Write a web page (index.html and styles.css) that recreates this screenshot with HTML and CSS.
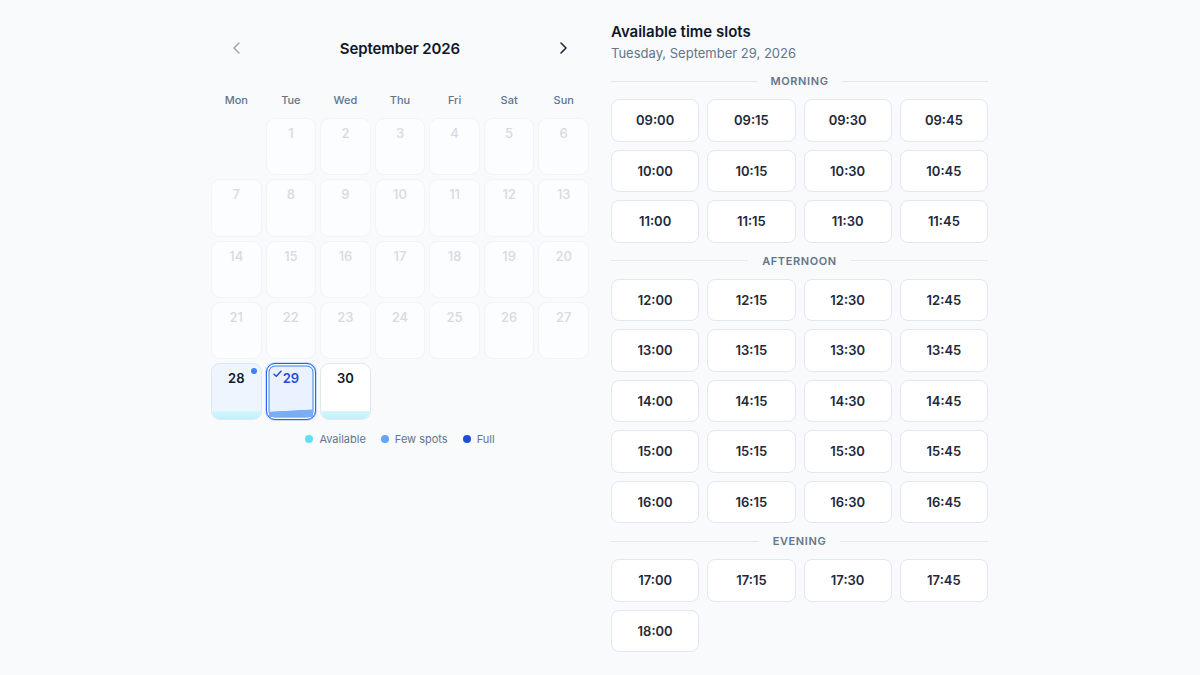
FILE: index.html
```html
<!DOCTYPE html>
<html lang="en">
<head>
<meta charset="utf-8">
<title>Booking</title>
<link rel="stylesheet" href="styles.css">
</head>
<body>
<div class="page">
  <section class="calendar">
    <div class="cal-head">
      <button class="nav nav-prev" aria-label="Previous month">
        <svg width="14" height="14" viewBox="0 0 14 14"><path d="M9 2 L4 7 L9 12" fill="none" stroke="currentColor" stroke-width="1.4" stroke-linecap="round" stroke-linejoin="round"/></svg>
      </button>
      <h2 class="month">September 2026</h2>
      <button class="nav nav-next" aria-label="Next month">
        <svg width="14" height="14" viewBox="0 0 14 14"><path d="M5 2 L10 7 L5 12" fill="none" stroke="currentColor" stroke-width="1.6" stroke-linecap="round" stroke-linejoin="round"/></svg>
      </button>
    </div>
    <div class="weekdays">
      <span>Mon</span><span>Tue</span><span>Wed</span><span>Thu</span><span>Fri</span><span>Sat</span><span>Sun</span>
    </div>
    <div class="grid">
      <div class="blank"></div>
      <div class="day off">1</div><div class="day off">2</div><div class="day off">3</div><div class="day off">4</div><div class="day off">5</div><div class="day off">6</div>
      <div class="day off">7</div><div class="day off">8</div><div class="day off">9</div><div class="day off">10</div><div class="day off">11</div><div class="day off">12</div><div class="day off">13</div>
      <div class="day off">14</div><div class="day off">15</div><div class="day off">16</div><div class="day off">17</div><div class="day off">18</div><div class="day off">19</div><div class="day off">20</div>
      <div class="day off">21</div><div class="day off">22</div><div class="day off">23</div><div class="day off">24</div><div class="day off">25</div><div class="day off">26</div><div class="day off">27</div>
      <div class="day avail today">28<span class="dot"></span><span class="bar"></span></div>
      <div class="day selected">
        <svg class="check" width="9" height="8" viewBox="0 0 9 8"><path d="M1 4.2 L3.3 6.3 L8 1.2" fill="none" stroke="currentColor" stroke-width="1.5" stroke-linecap="round" stroke-linejoin="round"/></svg>
        29<span class="bar wave"></span>
      </div>
      <div class="day avail plain">30<span class="bar"></span></div>
    </div>
    <div class="legend">
      <span class="item"><i class="ldot c-avail"></i>Available</span>
      <span class="item"><i class="ldot c-few"></i>Few spots</span>
      <span class="item"><i class="ldot c-full"></i>Full</span>
    </div>
  </section>

  <section class="slots">
    <h2 class="title">Available time slots</h2>
    <p class="subtitle">Tuesday, September 29, 2026</p>

    <div class="divider first"><span>MORNING</span></div>
    <div class="slot-grid">
      <button class="slot">09:00</button><button class="slot">09:15</button><button class="slot">09:30</button><button class="slot">09:45</button>
      <button class="slot">10:00</button><button class="slot">10:15</button><button class="slot">10:30</button><button class="slot">10:45</button>
      <button class="slot">11:00</button><button class="slot">11:15</button><button class="slot">11:30</button><button class="slot">11:45</button>
    </div>

    <div class="divider"><span>AFTERNOON</span></div>
    <div class="slot-grid">
      <button class="slot">12:00</button><button class="slot">12:15</button><button class="slot">12:30</button><button class="slot">12:45</button>
      <button class="slot">13:00</button><button class="slot">13:15</button><button class="slot">13:30</button><button class="slot">13:45</button>
      <button class="slot">14:00</button><button class="slot">14:15</button><button class="slot">14:30</button><button class="slot">14:45</button>
      <button class="slot">15:00</button><button class="slot">15:15</button><button class="slot">15:30</button><button class="slot">15:45</button>
      <button class="slot">16:00</button><button class="slot">16:15</button><button class="slot">16:30</button><button class="slot">16:45</button>
    </div>

    <div class="divider"><span>EVENING</span></div>
    <div class="slot-grid">
      <button class="slot">17:00</button><button class="slot">17:15</button><button class="slot">17:30</button><button class="slot">17:45</button>
      <button class="slot">18:00</button>
    </div>
  </section>
</div>
</body>
</html>
```

FILE: styles.css
```css
* { box-sizing: border-box; }
html, body { margin: 0; padding: 0; }
body {
  background: #f8fafc;
  font-family: Inter, "Noto Sans", "Liberation Sans", sans-serif;
  color: #0f172a;
  width: 1200px;
  height: 675px;
  overflow: hidden;
}
.page {
  display: flex;
  justify-content: flex-start;
  gap: 22px;
  padding-top: 22px;
  padding-left: 211px;
}

/* Calendar */
.calendar { width: 378px; display: flex; flex-direction: column; }
.cal-head {
  height: 52px;
  display: flex;
  align-items: center;
  justify-content: space-between;
  padding: 0 12px 0 12px;
}
.nav {
  width: 28px; height: 28px;
  border: 0; background: transparent; padding: 0;
  display: flex; align-items: center; justify-content: center;
  cursor: pointer;
}
.nav-prev { color: #94a3b8; }
.nav-next { color: #1e293b; }
.month { margin: 0; font-size: 15px; font-weight: 600; letter-spacing: -0.1px; color: #0f172a; }

.weekdays {
  margin-top: 16px;
  display: grid;
  grid-template-columns: repeat(7, 1fr);
  gap: 4px;
  height: 20px;
  align-items: center;
  text-align: center;
  font-size: 11px;
  color: #64748b;
  font-weight: 500;
}
.grid {
  margin-top: 8px;
  display: grid;
  grid-template-columns: repeat(7, 1fr);
  grid-auto-rows: 57.25px;
  gap: 4px;
}
.day {
  position: relative;
  border-radius: 9px;
  text-align: center;
  padding-top: 6px;
  line-height: 16px;
  font-size: 13px;
  font-weight: 600;
  overflow: hidden;
}
.off {
  color: #d5dbe3;
  font-weight: 500;
  background: rgba(255,255,255,0.5);
  border: 1px solid #f2f4f8;
}
.avail { border: 1px solid #e2e8f0; background: #fff; color: #0f172a; }
.today { background: #eef5ff; border-color: #dce8f8; }
.bar {
  position: absolute; left: 0; right: 0; bottom: 0; height: 8px;
  background: linear-gradient(#d5f6fc, #bff0fb);
}
.dot {
  position: absolute; top: 4px; right: 4px;
  width: 6px; height: 6px; border-radius: 50%;
  background: #3b82f6;
}
.selected {
  background: #eaf2ff;
  color: #1d4ed8;
  border: 1.5px solid #2563eb;
  box-shadow: inset 0 0 0 1.5px #fff, inset 0 0 0 2.5px #3b82f6, 0 0 0 1px rgba(59,130,246,0.25);
}
.selected .bar.wave {
  height: 9px;
  left: 2px; right: 2px; bottom: 2px;
  background: linear-gradient(177deg, transparent 0 30%, #79aef7 36% 100%);
}
.check {
  position: absolute; top: 6px; left: 6px; color: #1d4ed8;
}

.legend {
  margin-top: 12px;
  display: flex;
  justify-content: center;
  gap: 15px;
  font-size: 11px;
  color: #64748b;
}
.item { display: flex; align-items: center; gap: 6px; }
.ldot { width: 8px; height: 8px; border-radius: 50%; display: inline-block; }
.c-avail { background: #5ee0f3; }
.c-few { background: #60a5fa; }
.c-full { background: #1d4ed8; }

/* Slots */
.slots { width: 377px; display: flex; flex-direction: column; }
.title { margin: 0; font-size: 15px; line-height: 20px; font-weight: 600; color: #0f172a; }
.subtitle { margin: 1px 0 0; font-size: 13px; line-height: 20px; color: #64748b; }
.divider {
  display: flex; align-items: center; gap: 14px;
  height: 20px;
  margin: 8px 0 8px;
  font-size: 11px; font-weight: 600; letter-spacing: 0.6px; color: #64748b;
}
.divider.first { margin-top: 8px; }
.divider::before, .divider::after {
  content: ""; flex: 1; height: 1px; background: #e2e8f0;
}
.slot-grid {
  display: grid;
  grid-template-columns: repeat(4, 1fr);
  gap: 8px;
}
.slot {
  height: 42.5px;
  background: #fff;
  border: 1px solid #e2e8f0;
  border-radius: 8px;
  font-family: inherit;
  font-size: 13px;
  font-weight: 600;
  color: #1e293b;
  cursor: pointer;
  padding: 0;
}
```
